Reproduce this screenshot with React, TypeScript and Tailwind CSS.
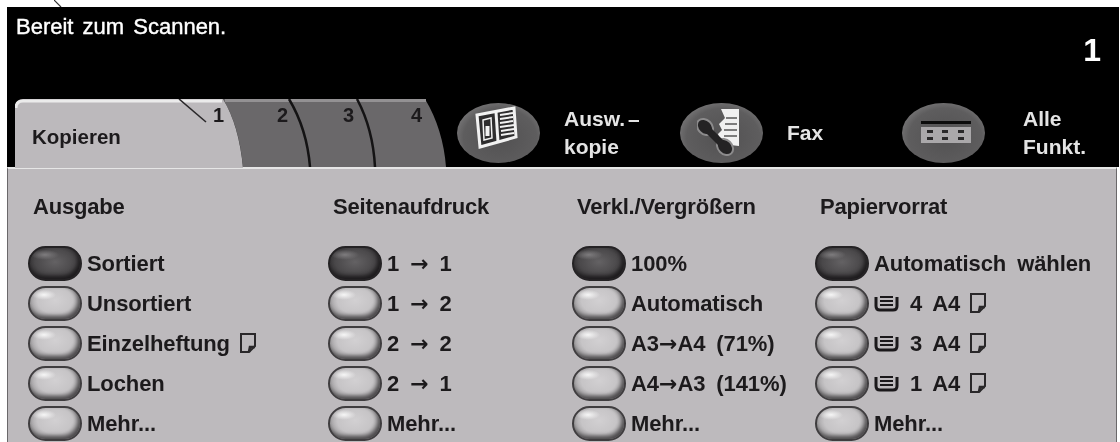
const columns = [
  {
    title: 'Ausgabe',
    rows: [
      { label: 'Sortiert', on: true },
      { label: 'Unsortiert' },
      { label: 'Einzelheftung', page: true },
      { label: 'Lochen' },
      { label: 'Mehr...' },
    ],
  },
  {
    title: 'Seitenaufdruck',
    rows: [
      { label: '1 → 1', on: true },
      { label: '1 → 2' },
      { label: '2 → 2' },
      { label: '2 → 1' },
      { label: 'Mehr...' },
    ],
  },
  {
    title: 'Verkl./Vergrößern',
    rows: [
      { label: '100%', on: true },
      { label: 'Automatisch' },
      { label: 'A3→A4 (71%)' },
      { label: 'A4→A3 (141%)' },
      { label: 'Mehr...' },
    ],
  },
  {
    title: 'Papiervorrat',
    rows: [
      { label: 'Automatisch wählen', on: true },
      { label: '4 A4', tray: true, page: true },
      { label: '3 A4', tray: true, page: true },
      { label: '1 A4', tray: true, page: true },
      { label: 'Mehr...' },
    ],
  },
]

function PageIcon() {
  return (
    <svg width="18" height="22" viewBox="0 0 18 22" fill="none" stroke="#2a282a" strokeWidth="2" className="ml-[4px] shrink-0">
      <path d="M2 2h14v12l-6 6H2z" />
      <path d="M10 20l1-5h5" strokeWidth="2.6" />
    </svg>
  )
}

function TrayIcon() {
  return (
    <svg width="25" height="18" viewBox="0 0 25 18" fill="none" stroke="#1a181a" className="shrink-0">
      <path d="M2 3v9q0 4 4 4h13q4 0 4-4V3" strokeWidth="3" />
      <path d="M6 3h13M6 7h13M6 11h13" strokeWidth="1.8" />
    </svg>
  )
}

function OptionButton({ on }: { on?: boolean }) {
  return (
    <span
      className={
        on
          ? 'block h-[35px] w-[54px] shrink-0 rounded-[18px] border-2 border-[#242224] bg-[radial-gradient(ellipse_14px_5px_at_30%_22%,#7e7c7e_0%,transparent_100%),radial-gradient(ellipse_at_50%_45%,#646264_0%,#4a484a_55%,#232123_100%)] shadow-[inset_-2px_-3px_4px_#1c1a1c]'
          : 'block h-[35px] w-[54px] shrink-0 rounded-[18px] border-2 border-[#3f3d3f] bg-[radial-gradient(ellipse_12px_5px_at_28%_22%,#f6f6f6_0%,transparent_100%),radial-gradient(ellipse_at_50%_40%,#d2d0d2_0%,#c6c4c6_50%,#959395_82%,#5c5a5c_100%)] shadow-[inset_-2px_-3px_4px_#4a484a]'
      }
    />
  )
}

function RoundKey({ children }: { children: React.ReactNode }) {
  return (
    <div className="flex h-[60px] w-[83px] shrink-0 items-center justify-center rounded-[50%] bg-[radial-gradient(ellipse_at_52%_58%,#525152_0%,#5e5d5e_60%,#848384_86%,#5f5e5f_100%)]">
      {children}
    </div>
  )
}

function TabShapes() {
  return (
    <svg width="432" height="69" viewBox="0 0 432 69" className="block">
      <path d="M208 0H410Q428 30 431 68H228Q224 26 208 0Z" fill="#6a686a" />
      <path d="M210 1.5H411" stroke="#939193" strokeWidth="3" />
      <path d="M274 0Q292 30 295 68M342 0Q358 30 360 68" fill="none" stroke="#141314" strokeWidth="2.5" />
      <path d="M0 69V10Q0 0 8 0H208Q224 26 228 69Z" fill="#bcb9bc" />
      <path d="M1 9Q1 2 8 2H207" fill="none" stroke="#ebebeb" strokeWidth="3" />
      <path d="M164 0L191 23" stroke="#2a282a" strokeWidth="1.6" />
    </svg>
  )
}

// the arrow glyph is missing from Liberation, DejaVu has the heavy one
function RowLabel({ text }: { text: string }) {
  const parts = text.split('→')
  if (parts.length === 1) return <>{text}</>
  return (
    <>
      {parts[0]}
      <span className="font-['DejaVu_Sans',sans-serif] tracking-normal">→</span>
      {parts[1]}
    </>
  )
}

export default function App() {
  return (
    <div className="flex h-[442px] w-[1120px] flex-col overflow-hidden bg-white pl-[7px] pr-[1px] blur-[0.5px] font-['Liberation_Sans',Arial,sans-serif]">
      <div className="h-[7px] shrink-0 pl-[47px]">
        <svg width="10" height="7" viewBox="0 0 10 7" className="block">
          <path d="M0 0L7 7" stroke="#333" strokeWidth="1.2" />
        </svg>
      </div>

      <div className="relative flex h-[160px] shrink-0 flex-col bg-black text-white">
        <div className="flex h-[92px] items-start justify-between pl-[9px] pr-[18px]">
          <span className="mt-[7px] text-[22px] leading-[26px] [word-spacing:3px] [-webkit-text-stroke:0.4px_#fff]">Bereit zum Scannen.</span>
          <span className="mt-[27px] text-[32px] font-bold leading-[32px]">1</span>
        </div>
        <div className="flex h-[68px] items-center">
          <div className="relative ml-[8px] h-[68px] w-[432px] shrink-0 self-end">
            <TabShapes />
            <span className="absolute left-[17px] top-[25px] text-[20.5px] font-bold leading-[26px] text-[#1c1a1c]">Kopieren</span>
            <span className="absolute left-[198px] top-[4px] text-[20px] font-bold leading-[24px] text-[#1c1a1c]">1</span>
            <span className="absolute left-[262px] top-[4px] text-[20px] font-bold leading-[24px] text-[#1c1a1c]">2</span>
            <span className="absolute left-[328px] top-[4px] text-[20px] font-bold leading-[24px] text-[#1c1a1c]">3</span>
            <span className="absolute left-[396px] top-[4px] text-[20px] font-bold leading-[24px] text-[#1c1a1c]">4</span>
          </div>
          <div className="ml-[10px]">
            <RoundKey>
              <svg width="44" height="44" viewBox="0 0 44 44" fill="none" stroke="#f2f2f2" className="mb-[10px] mr-[6px]">
                <path d="M3 9L40 2L42 31L6 41Z" fill="#2e2d2e" strokeWidth="3" />
                <path d="M22 6L24 36" strokeWidth="3" />
                <path d="M9 14L17 12L18 32L10 34Z" strokeWidth="1.5" />
                <path d="M13.5 20V30" strokeWidth="4" />
                <path d="M26 9L39 7M26 13L39 11M26 17L39 15M26 21L40 19M27 25L40 23M27 29L40 27" strokeWidth="2" />
              </svg>
            </RoundKey>
          </div>
          <div className="ml-[24px] w-[116px] text-[21px] font-bold leading-[28px] text-[#e4e4e4]">
            Ausw.<span className="ml-[3px]">–</span>
            <br />
            kopie
          </div>
          <RoundKey>
            <svg width="50" height="50" viewBox="0 0 50 50" fill="none" className="mb-[4px]">
              <path d="M24 3H42V40L24 38L21 28L25 24L22 18L28 12Z" fill="#f0f0f0" />
              <path d="M29 12H40M28 18H40M27 24H40M27 30H40" stroke="#555" strokeWidth="1.5" />
              <g stroke="#8c8b8c" strokeWidth="2" fill="#242324">
                <ellipse cx="8" cy="21" rx="7" ry="9" transform="rotate(-45 8 21)" />
                <ellipse cx="28" cy="41" rx="7" ry="9" transform="rotate(-45 28 41)" />
              </g>
              <path d="M8 21L28 41" stroke="#242324" strokeWidth="7" />
            </svg>
          </RoundKey>
          <div className="ml-[24px] w-[115px] text-[21px] font-bold text-[#e4e4e4]">Fax</div>
          <RoundKey>
            <svg width="50" height="24" viewBox="0 0 50 24" className="ml-[4px]">
              <rect x="0" y="0" width="50" height="3" fill="#0c0c0c" />
              <rect x="0" y="6" width="50" height="16" fill="#aaa8aa" />
              <g fill="#2a292a">
                <rect x="6" y="9" width="6" height="3" />
                <rect x="21" y="9" width="6" height="3" />
                <rect x="37" y="9" width="6" height="3" />
                <rect x="6" y="16" width="6" height="3" />
                <rect x="21" y="16" width="6" height="3" />
                <rect x="37" y="16" width="6" height="3" />
              </g>
            </svg>
          </RoundKey>
          <div className="ml-[38px] text-[21px] font-bold leading-[28px] text-[#e4e4e4]">
            Alle
            <br />
            Funkt.
          </div>
        </div>
      </div>

      <div className="mr-[2px] grid flex-1 grid-cols-[300px_244px_243px_1fr] border-b border-l border-r border-t-2 border-[#6a686a] border-t-[#e6e6e6] bg-[#bdbabd] pl-[20px] text-[#1c1a1c]">
        {columns.map((col) => (
          <div key={col.title}>
            <div className="mt-[24px] mb-[22px] pl-[5px] text-[22px] font-bold leading-[28px] tracking-[-0.2px]">{col.title}</div>
            <div className="flex flex-col">
              {col.rows.map((row) => (
                <div key={row.label} className="flex h-[40px] items-center gap-[5px]">
                  <OptionButton on={row.on} />
                  {row.tray && <TrayIcon />}
                  <span className={row.tray ? 'ml-[6px] whitespace-nowrap text-[22px] font-bold tracking-[-0.1px] [word-spacing:5px]' : 'whitespace-nowrap text-[22px] font-bold tracking-[-0.1px] [word-spacing:5px]'}>
                    <RowLabel text={row.label} />
                  </span>
                  {row.page && <PageIcon />}
                </div>
              ))}
            </div>
          </div>
        ))}
      </div>
    </div>
  )
}
